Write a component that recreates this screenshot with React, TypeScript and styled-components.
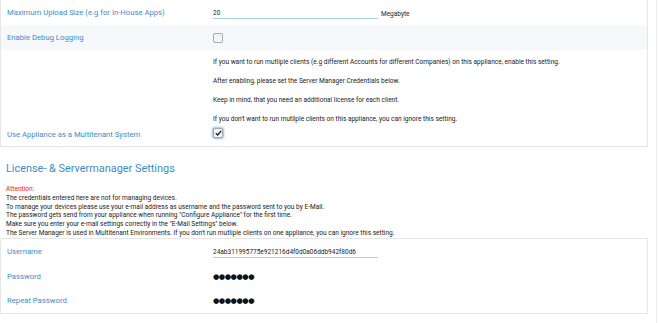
import React from 'react'
import styled, { createGlobalStyle } from 'styled-components'

const GlobalStyle = createGlobalStyle`
  html, body {
    margin: 0;
    padding: 0;
    background: #fff;
  }

  body {
    font-family: Roboto, "Liberation Sans", sans-serif;
    color: #333;
    overflow: hidden;
  }
`

const Page = styled.div`
  width: 657px;
  height: 323px;
  border-right: 1px solid #ececec;
  padding-right: 8px;
  box-sizing: border-box;
`

const Card = styled.div<{ top?: boolean }>`
  background: #fff;
  border: 1px solid #e6e6e6;
  border-top: ${({ top }) => top ? 'none' : '1px solid #e6e6e6'};
`

const Row = styled.div<{ shade?: boolean; h: number; align?: string }>`
  display: flex;
  align-items: ${({ align }) => align || 'center'};
  height: ${({ h }) => h}px;
  background: ${({ shade }) => shade ? '#f5f9fc' : 'transparent'};
`

const Label = styled.div<{ bottom?: number }>`
  width: 212px;
  padding-left: 6px;
  padding-bottom: ${({ bottom }) => bottom || 0}px;
  box-sizing: border-box;
  font-size: 7.7px;
  white-space: nowrap;
  color: #3d8ccb;
  flex-shrink: 0;
`

const Value = styled.div`
  display: flex;
  align-items: center;
  gap: 3px;
`

const Field = styled.div`
  width: 165px;
  height: 12px;
  border-bottom: 1px solid #a9d1ef;
  font-size: 6.5px;
  color: #222;
  display: flex;
  align-items: flex-end;
  padding-bottom: 1px;
  box-sizing: border-box;
`

const Unit = styled.span`
  font-size: 6.5px;
  color: #222;
  margin-top: 2px;
`

const Dots = styled.div`
  font-size: 7.3px;
  letter-spacing: -0.5px;
  color: #111;
  font-family: "DejaVu Sans", sans-serif;
`

const Box = styled.span<{ focus?: boolean }>`
  display: inline-flex;
  align-items: center;
  justify-content: center;
  width: 8px;
  height: 8px;
  border: 1px solid #a9a9a9;
  border-radius: 2px;
  background: #f4f4f4;
  box-shadow: ${({ focus }) => focus ? '0 0 2px 1px #8fc1ea' : 'none'};
`

const HelpColumn = styled.div`
  display: flex;
  flex-direction: column;
  padding-bottom: 8px;
`

const Help = styled.p<{ last?: boolean }>`
  margin: 0 0 ${({ last }) => last ? 4 : 10}px;
  font-size: 6.55px;
  line-height: 9px;
  color: #222;
`

const Heading = styled.h2`
  margin: 0;
  padding: 15px 0 0 6px;
  height: 28px;
  box-sizing: border-box;
  font-weight: 400;
  font-size: 10.9px;
  color: #3d8ccb;
`

const Notes = styled.div`
  padding: 10px 0 0 6px;
  height: 63px;
  box-sizing: border-box;
  font-size: 6.55px;
  line-height: 8.8px;
  color: #222;
`

const Attention = styled.div`
  color: #f01818;
`

const CheckBox = ({ checked }: { checked?: boolean }) => (
  <Box focus={checked}>
    {checked && (
      <svg width="7" height="6" viewBox="0 0 7 6">
        <path d="M0.8 3.2 L2.7 5 L6.2 0.9" fill="none" stroke="#222" strokeWidth="1.4" />
      </svg>
    )}
  </Box>
)

const App = () => {
  return (
    <>
      <GlobalStyle />
      <Page>
        <Card top>
          <Row h={25}>
            <Label>Maximum Upload Size (e.g for In-House Apps)</Label>
            <Value>
              <Field>20</Field>
              <Unit>Megabyte</Unit>
            </Value>
          </Row>
          <Row h={25} shade>
            <Label>Enable Debug Logging</Label>
            <Value><CheckBox /></Value>
          </Row>
          <Row h={96} align='flex-end'>
            <Label bottom={7}>Use Appliance as a Multitenant System</Label>
            <HelpColumn>
              <Help>If you want to run mutliple clients (e.g different Accounts for different Companies) on this appliance, enable this setting.</Help>
              <Help>After enabling, please set the Server Manager Credentials below.</Help>
              <Help>Keep in mind, that you need an additional license for each client.</Help>
              <Help last>If you don't want to run mutliple clients on this appliance, you can ignore this setting.</Help>
              <CheckBox checked />
            </HelpColumn>
          </Row>
        </Card>

        <Heading>License- &amp; Servermanager Settings</Heading>

        <Notes>
          <Attention>Attention:</Attention>
          The credentials entered here are not for managing devices.<br />
          To manage your devices please use your e-mail address as username and the password sent to you by E-Mail.<br />
          The password gets send from your appliance when running "Configure Appliance" for the first time.<br />
          Make sure you enter your e-mail settings correctly in the "E-Mail Settings" below.<br />
          The Server Manager is used in Multitenant Environments. If you don't run mutliple clients on one appliance, you can ignore this setting.
        </Notes>

        <Card>
          <Row h={25}>
            <Label>Username</Label>
            <Value><Field>24ab311995775e921216d4f0d0a06ddb942f80d6</Field></Value>
          </Row>
          <Row h={24}>
            <Label>Password</Label>
            <Value><Dots>●●●●●●●</Dots></Value>
          </Row>
          <Row h={25}>
            <Label>Repeat Password</Label>
            <Value><Dots>●●●●●●●</Dots></Value>
          </Row>
        </Card>
      </Page>
    </>
  )
}

export default App
